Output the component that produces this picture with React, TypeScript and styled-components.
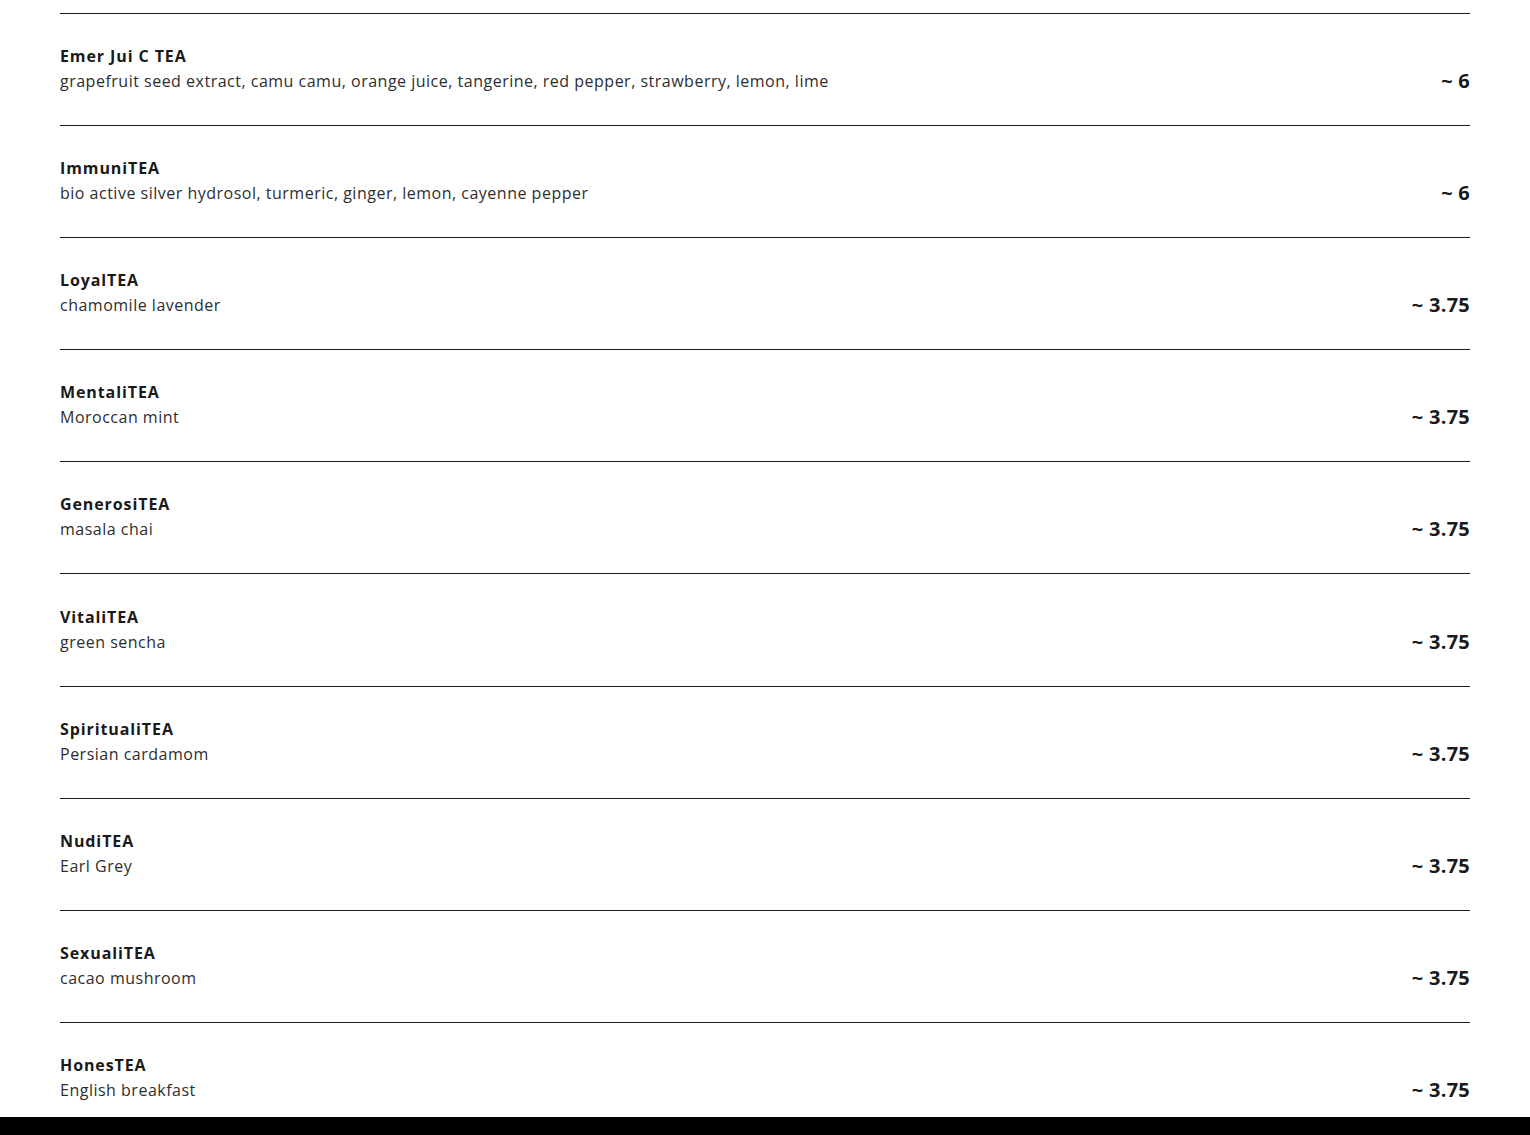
import React, {FC} from 'react';
import styled, {createGlobalStyle} from 'styled-components';

interface ITea {
  name: string
  description: string
  price: string
}

const teas: ITea[] = [
  {name: 'Emer Jui C TEA', description: 'grapefruit seed extract, camu camu, orange juice, tangerine, red pepper, strawberry, lemon, lime', price: '~ 6'},
  {name: 'ImmuniTEA', description: 'bio active silver hydrosol, turmeric, ginger, lemon, cayenne pepper', price: '~ 6'},
  {name: 'LoyalTEA', description: 'chamomile lavender', price: '~ 3.75'},
  {name: 'MentaliTEA', description: 'Moroccan mint', price: '~ 3.75'},
  {name: 'GenerosiTEA', description: 'masala chai', price: '~ 3.75'},
  {name: 'VitaliTEA', description: 'green sencha', price: '~ 3.75'},
  {name: 'SpiritualiTEA', description: 'Persian cardamom', price: '~ 3.75'},
  {name: 'NudiTEA', description: 'Earl Grey', price: '~ 3.75'},
  {name: 'SexualiTEA', description: 'cacao mushroom', price: '~ 3.75'},
  {name: 'HonesTEA', description: 'English breakfast', price: '~ 3.75'},
];

const GlobalStyle = createGlobalStyle`
  body {
    margin: 0;
    background: #fff;
    font-family: "Open Sans", "Noto Sans", sans-serif;
    color: #1b1b1b;
  }
`

const TeaRow: FC<{tea: ITea}> = ({tea}) => (
  <Row>
    <Info>
      <Name>{tea.name}</Name>
      <Description>{tea.description}</Description>
    </Info>
    <Price>{tea.price}</Price>
  </Row>
)

export default function App() {
  return (
    <>
      <GlobalStyle/>
      <Menu>
        {teas.map(tea => <TeaRow key={tea.name} tea={tea}/>)}
      </Menu>
      <Footer/>
    </>
  )
}

const Menu = styled.main`
  padding: 13px 60px 0;
`
const Row = styled.div`
  display: flex;
  justify-content: space-between;
  align-items: flex-end;
  border-top: 1px solid #1e1e1e;
  padding: 30px 0 32px;
  height: 49.1px;

  &:last-child {
    padding-bottom: 15px;
  }
`
const Info = styled.div`
  display: flex;
  flex-direction: column;
`
const Name = styled.div`
  font-size: 16px;
  font-weight: 700;
  line-height: 24px;
  letter-spacing: 0.9px;
  color: #1a1a1a;
`
const Description = styled.div`
  font-size: 16px;
  font-weight: 400;
  line-height: 25px;
  padding-top: 1px;
  margin-bottom: -1px;
  color: #2e2e2e;
  letter-spacing: 0.5px;
`
const Price = styled.div`
  font-size: 20px;
  font-weight: 700;
  line-height: 25px;
  letter-spacing: 0.25px;
  color: #1a1a1a;
`
const Footer = styled.footer`
  height: 18px;
  background: #000;
`
